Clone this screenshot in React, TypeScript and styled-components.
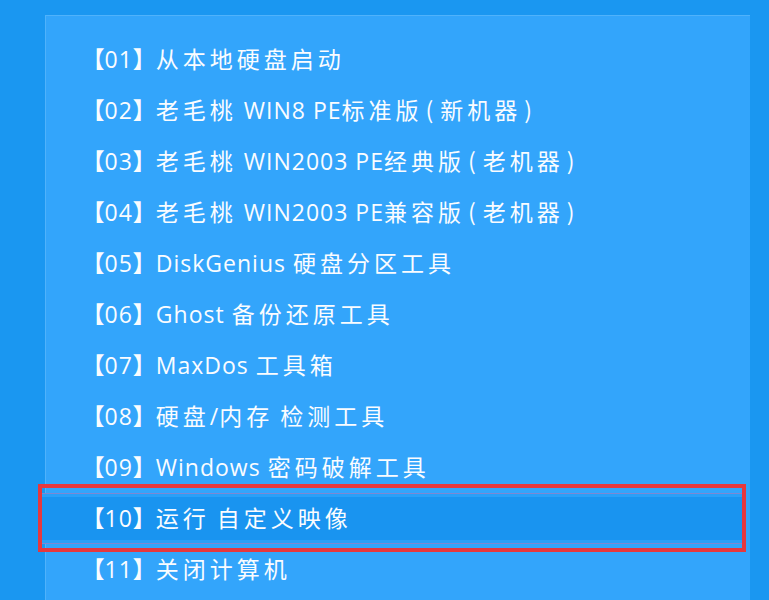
import styled, { createGlobalStyle } from "styled-components";

const items = [
  "【01】从本地硬盘启动",
  "【02】老毛桃 WIN8 PE标准版(新机器)",
  "【03】老毛桃 WIN2003 PE经典版(老机器)",
  "【04】老毛桃 WIN2003 PE兼容版(老机器)",
  "【05】DiskGenius 硬盘分区工具",
  "【06】Ghost 备份还原工具",
  "【07】MaxDos 工具箱",
  "【08】硬盘/内存 检测工具",
  "【09】Windows 密码破解工具",
  "【10】运行 自定义映像",
  "【11】关闭计算机",
];

const SELECTED = 9;

const GlobalStyle = createGlobalStyle`
  html, body {
    margin: 0;
    padding: 0;
    background: #1a97f1;
    overflow: hidden;
  }
`;

const Screen = styled.div`
  width: 769px;
  height: 600px;
  padding-top: 15px;
  padding-left: 45px;
  box-sizing: border-box;
  background: #1a97f1;
`;

const Panel = styled.div`
  width: 705px;
  height: 600px;
  box-sizing: border-box;
  padding-top: 18px;
  background: #33a5fb;
  border-top: 1px solid #4fb2fb;
  border-left: 1px solid #4fb2fb;
`;

const Row = styled.div<{ $selected?: boolean }>`
  position: relative;
  height: 51px;
  box-sizing: border-box;
  display: flex;
  align-items: center;
  padding-left: 48px;
  padding-bottom: 4px;
  margin-left: -4px;
  margin-right: 8px;
  color: #fafcff;
  font-family: "Open Sans", "Noto Sans CJK SC", sans-serif;
  font-size: 23px;
  letter-spacing: 1px;
  white-space: pre;
  background: ${(p) => (p.$selected ? "#1994f0" : "transparent")};
  border-top: 1px solid ${(p) => (p.$selected ? "#7e88d2" : "transparent")};
  border-bottom: 1px solid ${(p) => (p.$selected ? "#7e88d2" : "transparent")};
  box-shadow: ${(p) =>
    p.$selected ? "inset 0 3px 0 #2aa0f8, inset 0 -3px 0 #2aa0f8" : "none"};

  &::after {
    content: "";
    display: ${(p) => (p.$selected ? "block" : "none")};
    position: absolute;
    left: -4px;
    right: -4px;
    top: -10px;
    bottom: -9px;
    border: 4px solid #e6383e;
    pointer-events: none;
  }
`;

const Line = styled.span`
  display: inline-flex;
  align-items: baseline;
`;

const Cjk = styled.span`
  font-family: "Noto Sans CJK SC", sans-serif;
  letter-spacing: 4px;
`;

const Paren = styled.span`
  font-family: "Noto Sans CJK SC", sans-serif;
  letter-spacing: 4px;
  padding: 0 3px;
`;

const Bracket = styled.span<{ $open?: boolean }>`
  font-family: "Noto Sans CJK SC", sans-serif;
  font-weight: 700;
  font-feature-settings: ${(p) => (p.$open ? '"halt"' : "normal")};
  letter-spacing: 0px;
  margin-left: ${(p) => (p.$open ? "3px" : "0")};
`;

type Kind = "open" | "close" | "cjk" | "paren" | "latin";

function kindOf(ch: string): Kind {
  if (ch === "【") return "open";
  if (ch === "】") return "close";
  if (ch === "(" || ch === ")") return "paren";
  if (/[\u3000-\u9fff\uff00-\uffef]/.test(ch)) return "cjk";
  return "latin";
}

function tokenize(text: string) {
  const runs: { kind: Kind; text: string }[] = [];
  for (const ch of text) {
    const kind = kindOf(ch);
    const last = runs[runs.length - 1];
    if (last && last.kind === kind && kind !== "open" && kind !== "close") {
      last.text += ch;
    } else {
      runs.push({ kind, text: ch });
    }
  }
  return runs;
}

function Label({ text }: { text: string }) {
  return (
    <Line>
      {tokenize(text).map((run, i) => {
        switch (run.kind) {
          case "open":
            return (
              <Bracket key={i} $open>
                {run.text}
              </Bracket>
            );
          case "close":
            return <Bracket key={i}>{run.text}</Bracket>;
          case "cjk":
            return <Cjk key={i}>{run.text}</Cjk>;
          case "paren":
            return <Paren key={i}>{run.text}</Paren>;
          default:
            return <span key={i}>{run.text}</span>;
        }
      })}
    </Line>
  );
}

export default function App() {
  return (
    <>
      <GlobalStyle />
      <Screen>
        <Panel>
          {items.map((item, i) => (
            <Row key={item} $selected={i === SELECTED}>
              <Label text={item} />
            </Row>
          ))}
        </Panel>
      </Screen>
    </>
  );
}
